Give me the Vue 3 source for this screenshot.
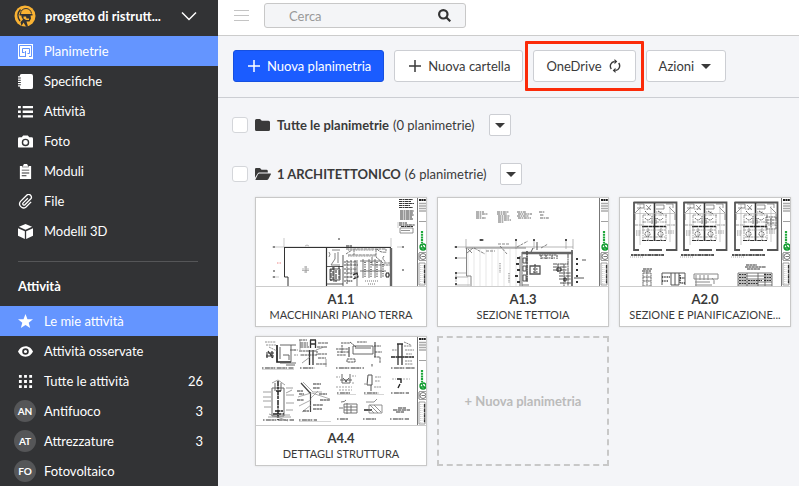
<script setup>
import { ref } from 'vue'

const search = ref('')

const modules = [
  { label: 'Planimetrie', icon: 'plan', active: true },
  { label: 'Specifiche', icon: 'book' },
  { label: 'Attività', icon: 'list' },
  { label: 'Foto', icon: 'camera' },
  { label: 'Moduli', icon: 'form' },
  { label: 'File', icon: 'clip' },
  { label: 'Modelli 3D', icon: 'cube' },
]

const tasks = [
  { label: 'Le mie attività', icon: 'star', active: true },
  { label: 'Attività osservate', icon: 'eye' },
  { label: 'Tutte le attività', icon: 'grid', count: 26 },
  { label: 'Antifuoco', badge: 'AN', count: 3 },
  { label: 'Attrezzature', badge: 'AT', count: 3 },
  { label: 'Fotovoltaico', badge: 'FO' },
]

const icons = {
  book: 'M4 0h10a2 2 0 0 1 2 2v12a2 2 0 0 1-2 2H4a2 2 0 0 1-2-2v-.6H0v-1.400h3v-1H0V9.600h3v-1H0V7.200h3v-1H0V4.800h3v-1H0V2.400h2A2 2 0 0 1 4 0z',
  list: 'M0 2h3v2.500H0zM5 2h11v2.500H5zM0 7h3v2.500H0zM5 7h11v2.500H5zM0 12h3v2.500H0zM5 12h11v2.500H5z',
  camera: 'M5.500 1.500h5L12 3.500h2.500A1.500 1.500 0 0 1 16 5v8.500a1 1 0 0 1-1 1H1a1 1 0 0 1-1-1V5a1.500 1.500 0 0 1 1.500-1.500H4zM8 5a4 4 0 1 0 0 8 4 4 0 0 0 0-8zM8 6.500a2.500 2.500 0 1 1 0 5 2.500 2.500 0 0 1 0-5z',
  form: 'M2 2h2.500v1.500h7V2H14v14H2zM5 2l1-1a2 2 0 0 1 4 0l1 1v1H5zM4 6v1h8V6zM4 9v1h8V9zM4 12v1h5v-1z',
  cube: 'M8 0l7 3-7 3.200L1 3zM0 4.500l7.300 3.300V16L0 12.500zM16 4.500L8.700 7.800V16l7.300-3.500z',
  star: 'M8 0l2.100 5.500 5.900.2-4.600 3.600L13 15 8 11.700 3 15l1.600-5.700L0 5.700l5.900-.2z',
  eye: 'M8 2.500c4 0 6.500 2.500 8 5.500-1.500 3-4 5.500-8 5.500S1.500 11 0 8c1.500-3 4-5.500 8-5.500zM8 4.500a3.500 3.500 0 1 0 0 7 3.500 3.500 0 0 0 0-7zM8 6.300a1.700 1.700 0 1 1 0 3.400 1.700 1.700 0 0 1 0-3.400z',
  grid: 'M1 1h3v3H1zM6.500 1h3v3h-3zM12 1h3v3h-3zM1 6.500h3v3H1zM6.500 6.500h3v3h-3zM12 6.500h3v3h-3zM1 12h3v3H1zM6.500 12h3v3h-3zM12 12h3v3h-3z',
}

// Title block printed along the right edge of every sheet.
const titleBlock = [
  { d: 'M161.500 0V88', c: '#777', w: 1 },
  { d: 'M163 2H170', c: '#222', w: 2, t: '2 .4' },
  { d: 'M163 5.500H170M163 8H170M163 10.500H170M163 13H170', c: '#aaa', w: 1.600 },
  { d: 'M163 23.500H170M163 54.500H170M163 62.500H170M163 65H169V87H163Z', c: '#888', w: 0.800 },
  { d: 'M166 33V45', c: '#20a83c', w: 2.200, t: '2 .7' },
  { d: 'M164 49a3 3 0 1 0 6 0a3 3 0 1 0-6 0M164.500 50H169M166 47L169 52', c: '#0d9a2c', w: 1.300 },
  { d: 'M164 58.500a3 3 0 1 0 6 0a3 3 0 1 0-6 0M165.500 58.500H169M163 55V62', c: '#666', w: 0.900 },
  { d: 'M168.500 67V86', c: '#333', w: 1.300, t: '3 .6 1 .5' },
  { d: 'M164.500 67V86M166 67V86', c: '#bbb', w: 0.600, t: '1 1' },
]

const rafters = 'M30 51V88M36 51V88M42 51V88M48 51V88M54 51V88M60 51V88M66 51V88M72 51V88M78 51V88'
const rooms = [0, 50, 101]
const roomPaths = rooms.flatMap((x) => [
  { d: `M${x + 13.500} 4.500H${x + 56.500}V52H${x + 46}M${x + 14} 4V52H${x + 19}M${x + 29} 52H${x + 42}`, c: '#555', w: 1.800 },
  { d: `M${x + 34.500} 5V42`, c: '#333', w: 1.600 },
  { d: `M${x + 22} 28.500H${x + 46}`, c: '#222', w: 1.600, t: '6 .5 4 .4' },
  { d: `M${x + 22} 42.500H${x + 46}`, c: '#333', w: 1.200, t: '4 .5 2 .6' },
  { d: `M${x + 11} 57H${x + 44}`, c: '#222', w: 1.300, t: '2 .5 4 .4' },
  { d: `M${x + 10} 59H${x + 24}`, c: '#999', w: 0.800, t: '1 1' },
  { d: `M${x + 15} 15L${x + 21} 9M${x + 55} 15L${x + 49} 9M${x + 15} 16V22M${x + 55} 16V22M${x + 17} 6H${x + 24}V10H${x + 17}M${x + 46} 6H${x + 53}V10M${x + 36} 7H${x + 44}V11H${x + 36}M${x + 26} 7L${x + 31} 12M${x + 31} 7L${x + 27} 12`, c: '#666', w: 0.700 },
  { d: `M${x + 14} 15.500H${x + 56}M${x + 20} 6V47M${x + 50} 8V44`, c: '#aaa', w: 0.600 },
  { d: `M${x + 23} 17H${x + 47}M${x + 23} 17V42M${x + 46} 17V42M${x + 23} 24H${x + 33}M${x + 36} 24H${x + 46}M${x + 22} 32H${x + 46}M${x + 28} 30V42M${x + 41} 30V42M${x + 15} 27H${x + 22}M${x + 47} 27H${x + 55}M${x + 24} 39H${x + 45}`, c: '#777', w: 0.700, t: '3 .8 1 .6' },
  { d: `M${x + 25} 13l4 4M${x + 38} 13l5 3M${x + 25} 20q3 4 6 0M${x + 37} 20q3 4 6 0M${x + 25} 36a2.500 2.500 0 1 0 5 0a2.500 2.500 0 1 0-5 0M${x + 38} 36a2.500 2.500 0 1 0 5 0a2.500 2.500 0 1 0-5 0M${x + 36} 20V26M${x + 32} 18V26`, c: '#333', w: 0.800, t: '1.500 .6' },
  { d: `M${x + 16} 33H${x + 21}M${x + 16} 35H${x + 21}M${x + 16} 37H${x + 20}M${x + 48} 33H${x + 54}M${x + 48} 35H${x + 54}M${x + 36} 14H${x + 42}M${x + 24} 11H${x + 31}`, c: '#777', w: 0.800, t: '1 .6' },
])

const a11 = [
  { d: 'M143 1.500H157M143 3.500H155M143 5.500H158M143 7.500H154M143 9.500H157M144 13H158M144 15H157M144 17H158M144 19H156M144 21H157M143 25H151M143 27H159M145 28.500H157', c: '#333', w: 1.100, t: '3 .5 1.500 .5 4 .4' },
  { d: 'M144 30H157V35H144ZM145 32.500H154', c: '#777', w: 0.800 },
  { d: 'M142 24V30M16 49H135M135 40V49M28 40V49M141 49H148M16 79H23', c: '#bbb', w: 0.800 },
  { d: 'M28 49.500H135M28.500 49V79H32V88', c: '#333', w: 1 },
  { d: 'M135 50V88', c: '#666', w: 2.400 },
  { d: 'M70.500 50V88', c: '#333', w: 1.200 },
  { d: 'M71 68.500H87M87 57V88M71 86H87M78 69V84M74 71H84V82H74Z', c: '#444', w: 0.900 },
  { d: 'M75 71V83M77 69V82M80 72V84M83 68V82', c: '#222', w: 1, t: '3 1 5 .8' },
  { d: 'M90 51H130V53M92 57H120M90 56L96 52M98 51V57M120 51V59L127 65H134M121 51Q124 55 131 54M116 59V67H134M128 58Q125 61 130 64', c: '#555', w: 0.800, t: '3 .6' },
  { d: 'M92 52H118M92 58H119', c: '#aaa', w: 1.400, t: '1 .6' },
  { d: 'M88 64H101M88 67H102M88 71H101M88 75H101M88 79H97M88 83H97M91 62V86M95 62V80M99 62V80', c: '#444', w: 0.900, t: '2 .8 3 .6' },
  { d: 'M101 62V88M107 61V80M113 61V80M119 61V80M125 64V80M104 73H130M104 63H126', c: '#555', w: 0.800 },
  { d: 'M109 64V79M115 64V79M121 64V79M127 66V79', c: '#444', w: 1.400, t: '1 1.300' },
  { d: 'M90 48H96M97 77l4-2 1 4-5 2M130 75h3v4h-3z', c: '#222', w: 1.200, t: '3 .5' },
  { d: 'M109 83H122M112 86H119M91 83H96', c: '#666', w: 0.900, t: '1 1' },
  { d: 'M73 54q2 2 0 5M76 52H84M82 54V65M79 55V61L75 67H84', c: '#777', w: 0.900 },
  { d: 'M46 71H53M48 69H51M46 72.500H53M48 74H51M50 68V75M49 48q2-2 4 0', c: '#888', w: 0.600 },
  { d: 'M21 65H26', c: '#e88', w: 1, t: '1.500 1' },
  { d: 'M17 49h2M17 73h2M82 41h2M146 49h2M146 72h2M17 79h2', c: '#333', w: 1.200 },
]

const a13 = [
  { d: 'M38 14H46M38 16H50M38 18H44M38 20H48M59 14H71M59 16H69M60 18H72M60 20H71M60 22H73M60 24H66M79 14H88M80 16H94M79 18H91M80 20H93M101 14H107M102 17H106M102 20H111', c: '#555', w: 0.900, t: '3 .6 1.500 .7' },
  { d: rafters, c: '#ddd', w: 0.700 },
  { d: 'M16 49H135M28 41V51M135 41V51M78 41V51M96 42V51M17 60H28M17 75H28M17 79H30M17 87H32M18 76V84M128 41V51', c: '#999', w: 0.700 },
  { d: 'M28 50H88M28.500 50V78H33V88M29 55l6-5M30 51l4 4', c: '#777', w: 0.900 },
  { d: 'M48 53H57M36 50L47 56M62 48L69 56M79 49L90 43M41 42H46M60 46H72M103 50L110 46', c: '#555', w: 0.700, t: '3 1' },
  { d: 'M84 55H135', c: '#666', w: 2.600 },
  { d: 'M89 53V84', c: '#555', w: 1.700, t: '4 .4 2 .3' },
  { d: 'M84 54V88M84 87H91M82 58V88', c: '#777', w: 1.100 },
  { d: 'M79 60h3M78 66h3M79 72h3M77 78h3M79 84h3', c: '#333', w: 2 },
  { d: 'M85 60h3v5h-3zM85 68h3v5h-3zM85 77h3v6h-3z', c: '#444', w: 0.900 },
  { d: 'M92 68h10v8h-10z', c: '#555', w: 1.300 },
  { d: 'M95 71h5M95 74h5M97 66V75', c: '#333', w: 1, t: '2 .6' },
  { d: 'M101 57h18M103 60h14M103 57v4M108 57v4M114 57v4M119 57v4', c: '#555', w: 1.100, t: '2 .5' },
  { d: 'M115 66H130M115 69H129M115 72H129M121 75H133M121 78H133M121 81H133M122 85H133M120 66V74M126 66V88M130 56V88', c: '#555', w: 1, t: '4 .5 2 .4' },
  { d: 'M134 52V88', c: '#666', w: 1.800 },
  { d: 'M119 70h4v3h-4zM126 80h2v3h-2z', c: '#222', w: 1 },
  { d: 'M138 61h2M138 66h2M138 72h2M138 78h2M138 84h2', c: '#333', w: 1.800 },
  { d: 'M62 65V75M71 75V85', c: '#888', w: 1.100, t: '1 .7' },
  { d: 'M144 62H148M136 80H146M95 50l-2 4M99 44v8', c: '#444', w: 0.900 },
  { d: 'M17 60h2M17 49h2M17 75h2M17 80h2M17 86h2M42 42h3M77 42h2M95 42h2M127 42h2', c: '#222', w: 1.300 },
]

const a20 = [
  ...roomPaths,
  { d: 'M146 19h10v12h-10zM147 22h8M147 25h8M151 20v10', c: '#555', w: 0.900, t: '2 .5' },
  { d: 'M23 71H32M22 73H31M126 67H137M125 69H146M127 71H140', c: '#333', w: 1.100, t: '3 .4' },
  { d: 'M23 75h8v13h-8zM23 79h8M23 83h8M27 74v13', c: '#666', w: 1, t: '2 .4' },
  { d: 'M42 75h23v12M42 75v12M51 75v12h8v-12M55 75v12', c: '#555', w: 1 },
  { d: 'M42 79H50M42 83H48M60 77v8h5M60 80h5', c: '#333', w: 1.400, t: '1 .7' },
  { d: 'M74 76h24v5H74zM76 77V88M80 77V82M84 77V82M88 77V82M92 80q3 2 2 6M75 84H90M75 87H92', c: '#888', w: 1 },
  { d: 'M118 75H152M118 78H152M118 81H152M118 84H152M118 87H152M118 75V88M127 75V88M138 75V88M145 75V88M152 75V88', c: '#555', w: 0.800 },
  { d: 'M119 76.500H126M119 79.500H126M119 82.500H126M119 85.500H126M144 76.500H151M144 79.500H151M144 82.500H151M128 82.500H142M128 85.500H138', c: '#333', w: 1, t: '2 .6' },
]

const a44 = [
  { d: 'M6 31H38M44 31H59M80 31H108M135 31H159M7 83H38M43 83H61M81 56H94M108 56H123M135 56H153M81 82H92M107 82H120M134 82H153', c: '#333', w: 1.200, t: '1.500 1.400 5 .5 3 .4' },
  { d: 'M6 32.500H38M43 84.500H75M81 57.500H100M108 57.500H128', c: '#bbb', w: 0.600 },
  { d: 'M21 8V25H35', c: '#222', w: 1.700 },
  { d: 'M35 8V25M24 10V22M27 18h6v5M24 8H40M34 13H40M24 26H40M30 28H39', c: '#555', w: 0.900 },
  { d: 'M10 16h8M10 19h8M11 17v4M16 14v7M12 14l5 7', c: '#333', w: 1.200 },
  { d: 'M9 5H20M10 8H20M13 10L21 14M38 13h4M38 18h4', c: '#777', w: 0.800, t: '2 .7' },
  { d: 'M54.500 3V11M59.500 3V11M54 3H60M54 7H60M53.500 13V28M57 13V28', c: '#333', w: 1.300 },
  { d: 'M43 14H61V18H44M44 6H52M44 8H52M44 10H53M43 3H51M62 6H72M61 10H71M62 17H71M62 21H70M60 27H71', c: '#555', w: 1, t: '3 .5' },
  { d: 'M46 26L54 20M60 13l8-3M44 3v10M70 22v8', c: '#777', w: 0.700 },
  { d: 'M97 9H117V17H97ZM99 11H115', c: '#555', w: 0.900 },
  { d: 'M80 12H92M81 15H93M81 18H90M85 6H94M86 8V16M94 5l6 5M101 5H111M118 9H125M119 15H126M118 20H124V26M116 27V30M91 22H99V25H91Z', c: '#444', w: 0.900, t: '2.500 .6' },
  { d: 'M93 10V20M119 5V20', c: '#444', w: 1.100 },
  { d: 'M142 7V28M146 7V28M141 7H147', c: '#333', w: 1.300 },
  { d: 'M135 20H158', c: '#222', w: 1.500, t: '4 .5 2 .3' },
  { d: 'M148 5l7 3M148 9H156M149 13H158M150 17H156M136 13H141M149 24H156M149 27H157', c: '#777', w: 0.900, t: '2 .6' },
  { d: 'M16 51H28V79H16ZM19 46V54M25 46V54', c: '#666', w: 1 },
  { d: 'M22 44V83M20 54H25M19 74H27M17 77H28', c: '#222', w: 1.500, t: '5 .5 3 1' },
  { d: 'M12 80H35M13 77L32 84M26 78h8M16 46l6-3 7 5M30 56l6-3M7 55H15M7 60H15M7 64H15M8 70H15M30 51H37M30 58H38M30 66H38M30 73H37', c: '#888', w: 0.800 },
  { d: 'M54.500 55V75M45 46L55 57', c: '#444', w: 1.200 },
  { d: 'M47 45L57 55H66M56 56L74 62M55 61L62 54M42 60l13-4M43 69l12-6M46 75l9-7', c: '#888', w: 0.700 },
  { d: 'M57 47H65M57 51H64M41 54H47M43 57H48M41 63H48M63 57H71M64 63H74M57 68H67M57 72H66M47 74H53', c: '#333', w: 1.100, t: '3 .4' },
  { d: 'M86 37V46H94V37M84 43H96M87 41l4 4M93 41l-4 4', c: '#666', w: 1 },
  { d: 'M80 40H84M96 39H100M96 46H99M80 50H96M83 53H96', c: '#888', w: 0.800, t: '2 1' },
  { d: 'M112 38H116V48H111ZM115 48V54', c: '#555', w: 1 },
  { d: 'M119 40H125M119 44H124M118 50H125M108 47H111', c: '#888', w: 0.900, t: '2 .6' },
  { d: 'M141 42H145V46M144 47l-2 4', c: '#222', w: 1.400 },
  { d: 'M147 42H154M136 42H140', c: '#999', w: 0.800, t: '2 1' },
  { d: 'M88 67H101V76H88ZM88 70H101M88 73H101M91 66V77M95 68V76M85 65q4 0 5-2M83 71H87', c: '#666', w: 0.900 },
  { d: 'M108 73H116', c: '#222', w: 1.500 },
  { d: 'M113 68H126V76H113ZM114 68l8 8M118 68l7 7M114 72l4 4M110 65H118L121 62', c: '#777', w: 0.800 },
  { d: 'M137 73H154M142 71H150M140 75H148', c: '#333', w: 1.100, t: '4 .5' },
]

const sheets = [
  { code: 'A1.1', name: 'MACCHINARI PIANO TERRA', art: a11 },
  { code: 'A1.3', name: 'SEZIONE TETTOIA', art: a13 },
  { code: 'A2.0', name: 'SEZIONE E PIANIFICAZIONE...', art: a20 },
  { code: 'A4.4', name: 'DETTAGLI STRUTTURA', art: a44 },
].map((s) => ({ ...s, art: [...s.art, ...titleBlock] }))

const folders = [
  { name: 'Tutte le planimetrie', count: '(0 planimetrie)', open: false, id: 'folder-all' },
  { name: '1 ARCHITETTONICO', count: '(6 planimetrie)', open: true, id: 'folder-arch' },
]
</script>

<template>
  <div class="app">
    <aside class="sidebar">
      <button class="project" type="button">
        <svg class="logo" viewBox="0 0 22 22" aria-hidden="true">
          <circle cx="11" cy="11" r="10.500" fill="#f9b233" />
          <path d="M6.500 4.500C3.500 7.500 3 12 6 16" fill="none" stroke="#323335" stroke-width="1.500" />
          <path d="M6.500 9C6.500 5.500 9 3.500 12 3.500S17 5.500 17.500 8.500" fill="none" stroke="#323335" stroke-width="1" />
          <path d="M5.500 9H18.500V10.500H16.500L17 13.500 15.500 16.500H12.500L14 21.500H12L9.500 17.500 7.500 21 6.500 17 9 14.500 7.500 12V10.500H5.500Z" fill="#323335" />
          <path d="M9.500 11.500H12L12.500 13.500H15V15H12L9.500 13.500Z" fill="#f9b233" />
        </svg>
        <span class="project-name">progetto di ristrutt...</span>
        <svg class="chevron" viewBox="0 0 16 10" aria-hidden="true"><path d="M1 1.500L8 8.500 15 1.500" /></svg>
      </button>
      <nav class="nav">
        <a v-for="m in modules" :key="m.label" href="#" class="item" :class="{ active: m.active }">
          <span class="slot">
            <svg v-if="m.icon === 'clip'" class="icon" viewBox="0 0 16 16" aria-hidden="true">
              <path class="line" d="M10.500 4.500L5.500 9.500a1.300 1.300 0 0 0 1.900 1.900l6-6a2.900 2.900 0 0 0-4.100-4.100L2.700 7.900a4.200 4.200 0 0 0 5.900 5.900l5.400-5.400" />
            </svg>
            <svg v-else-if="m.icon === 'plan'" class="icon" viewBox="0 0 15 15" aria-hidden="true">
              <rect width="15" height="15" />
              <path class="walls" d="M8 12.500H1.500V1.500H13.500V12.500H11M4.500 9V4.500H11.500V9.500H9.500M4 8.500H6.500M7.500 7V13" />
            </svg>
            <svg v-else class="icon" viewBox="0 0 16 16" aria-hidden="true"><path fill-rule="evenodd" :d="icons[m.icon]" /></svg>
          </span>
          <span class="label">{{ m.label }}</span>
        </a>
      </nav>
      <hr class="rule" />
      <h2 class="heading">Attività</h2>
      <nav class="nav">
        <a v-for="t in tasks" :key="t.label" href="#" class="item" :class="{ active: t.active }">
          <span class="slot">
            <span v-if="t.badge" class="avatar">{{ t.badge }}</span>
            <svg v-else class="icon" viewBox="0 0 16 16" aria-hidden="true"><path fill-rule="evenodd" :d="icons[t.icon]" /></svg>
          </span>
          <span class="label">{{ t.label }}</span>
          <span v-if="t.count" class="count">{{ t.count }}</span>
        </a>
      </nav>
    </aside>

    <main class="main">
      <header class="topbar">
        <button class="menu" type="button" aria-label="Menu">
          <svg viewBox="0 0 15 12" aria-hidden="true"><path d="M0 .5H15M0 5.500H15M0 10.500H15" /></svg>
        </button>
        <form class="search" @submit.prevent>
          <input v-model="search" type="search" placeholder="Cerca" aria-label="Cerca" />
          <button type="submit" aria-label="Cerca">
            <svg viewBox="0 0 13 13" aria-hidden="true"><circle cx="5.300" cy="5.300" r="4.200" /><path d="M8.500 8.500L12.300 12.300" /></svg>
          </button>
        </form>
      </header>

      <div class="toolbar">
        <button class="btn primary" type="button">
          <svg class="plus" viewBox="0 0 12 12" aria-hidden="true"><path d="M6 0V12M0 6H12" /></svg>Nuova planimetria
        </button>
        <button class="btn lead" type="button">
          <svg class="plus" viewBox="0 0 12 12" aria-hidden="true"><path d="M6 0V12M0 6H12" /></svg>Nuova cartella
        </button>
        <button class="btn marked" type="button">
          OneDrive
          <svg class="sync" viewBox="0 0 12 14" aria-hidden="true">
            <path class="line" d="M2.300 10A4.700 4.700 0 0 1 5.500 2.500M9.700 4A4.700 4.700 0 0 1 6.500 11.500" />
            <path d="M5.500 0L8.300 2.600 5.500 5.200ZM6.500 8.800L3.700 11.400 6.500 14Z" />
          </svg>
        </button>
        <button class="btn" type="button">
          Azioni
          <svg class="caret" viewBox="0 0 10 5" aria-hidden="true"><path d="M0 0H10L5 5Z" /></svg>
        </button>
      </div>

      <div class="content">
        <section v-for="f in folders" :key="f.id" class="folder">
          <div class="folder-head">
            <input :id="f.id" type="checkbox" />
            <label :for="f.id">
              <svg class="folder-icon" viewBox="0 0 16 12" aria-hidden="true">
                <path v-if="f.open" d="M0 1.500A1.300 1.300 0 0 1 1.300 0H5l1.500 1.800h5A1.300 1.300 0 0 1 12.800 3v1.500H4.500A2.200 2.200 0 0 0 2.500 5.700L0 9.800ZM4.300 5.500H15.500q.7 0 .4.700L13.400 11a1.800 1.800 0 0 1-1.600 1H.8Q.2 12 .5 11.400L3 6.300a1.500 1.500 0 0 1 1.300-.8Z" />
                <path v-else d="M0 1.500A1.500 1.500 0 0 1 1.500 0H5L6.800 1.800H13.500A1.500 1.500 0 0 1 15 3.300V10.500A1.500 1.500 0 0 1 13.500 12H1.500A1.500 1.500 0 0 1 0 10.500Z" />
              </svg>
              <strong>{{ f.name }}</strong> <span>{{ f.count }}</span>
            </label>
            <button class="drop" type="button" :aria-label="f.name">
              <svg class="caret" viewBox="0 0 10 5" aria-hidden="true"><path d="M0 0H10L5 5Z" /></svg>
            </button>
          </div>
          <div v-if="f.open" class="sheets">
            <a v-for="s in sheets" :key="s.code" href="#" class="sheet">
              <svg class="thumb" viewBox="0 0 170 88" aria-hidden="true">
                <path v-for="(p, i) in s.art" :key="i" :d="p.d" :stroke="p.c" :stroke-width="p.w" :stroke-dasharray="p.t" fill="none" />
              </svg>
              <span class="caption">
                <strong>{{ s.code }}</strong>
                <span>{{ s.name }}</span>
              </span>
            </a>
            <button class="add" type="button">+ Nuova planimetria</button>
          </div>
        </section>
      </div>
    </main>
  </div>
</template>

<style>
body {
  background: #f4f5f8;
}
</style>

<style scoped>
.app {
  display: flex;
  min-height: 100vh;
  font: 13px/20px Lato, "Liberation Sans", sans-serif;
  color: #3a3a3a;
}
.app * {
  box-sizing: border-box;
}
button,
input {
  font: inherit;
  color: inherit;
  margin: 0;
}
button {
  cursor: pointer;
}
a {
  color: inherit;
  text-decoration: none;
}
svg {
  display: block;
  flex: none;
}

.sidebar {
  flex: none;
  width: 218px;
  background: #323335;
  color: #fff;
}
.project {
  display: flex;
  align-items: center;
  width: 100%;
  height: 36px;
  padding: 0 21px 4px 14px;
  border: 0;
  background: none;
  font-weight: 700;
  text-align: left;
}
.logo {
  width: 22px;
  height: 22px;
}
.project-name {
  flex: 1;
  padding-left: 9px;
  white-space: nowrap;
}
.chevron {
  width: 16px;
  height: 10px;
  fill: none;
  stroke: #fff;
  stroke-width: 1.5;
}
.item {
  display: flex;
  align-items: center;
  height: 30px;
  padding: 0 15px 0 14px;
}
.item.active {
  background: #6495ff;
}
.slot {
  display: flex;
  justify-content: center;
  width: 22px;
}
.icon {
  width: 15px;
  height: 15px;
  fill: #fff;
}
.line {
  fill: none;
  stroke: currentColor;
  stroke-width: 1.4;
}
.walls {
  fill: none;
  stroke: #6495ff;
  stroke-width: 1;
}
.label {
  flex: 1;
  padding-left: 8px;
}
.avatar {
  width: 22px;
  height: 22px;
  border-radius: 50%;
  background: #555658;
  font-size: 10px;
  font-weight: 700;
  line-height: 22px;
  text-align: center;
}
.rule {
  height: 1px;
  margin: 15px 20px 14px 18px;
  border: 0;
  background: #555658;
}
.heading {
  margin: 0;
  padding: 0 18px 10px;
  font-size: 13px;
  line-height: 20px;
}

.main {
  flex: 1;
  min-width: 0;
}
.topbar {
  display: flex;
  align-items: center;
  gap: 15px;
  height: 36px;
  padding: 0 16px 4px;
  border-bottom: 1px solid #ccc;
  background: #fff;
}
.menu {
  padding: 0;
  border: 0;
  background: none;
}
.menu svg {
  width: 15px;
  height: 12px;
  stroke: #c4c4c4;
}
.search {
  display: flex;
  align-items: center;
  width: 202px;
  height: 25px;
  padding: 0 14px 0 24px;
  border: 1px solid #c8c8c8;
  border-radius: 3px;
  background: #f4f5f7;
}
.search input {
  flex: 1;
  min-width: 0;
  padding: 0;
  border: 0;
  outline: 0;
  background: none;
  appearance: none;
}
.search input::placeholder {
  color: #999;
}
.search button {
  padding: 0;
  border: 0;
  background: none;
}
.search svg {
  width: 13px;
  height: 13px;
  fill: none;
  stroke: #333;
  stroke-width: 2.2;
}
.toolbar {
  display: flex;
  flex-wrap: wrap;
  gap: 10px;
  padding: 14px 15px 15px;
  border-bottom: 1px solid #ccced3;
}
.btn {
  position: relative;
  display: flex;
  align-items: center;
  gap: 7px;
  height: 32px;
  padding: 0 14px 0 12px;
  border: 1px solid #ccced3;
  border-radius: 3px;
  background: #fff;
  white-space: nowrap;
}
.lead,
.primary {
  padding: 0 12px 0 14px;
}
.primary {
  border-color: #1650e0;
  background: #1b5cff;
  color: #fff;
}
.plus {
  width: 12px;
  height: 12px;
  stroke: currentColor;
  stroke-width: 1.5;
}
.sync {
  width: 12px;
  height: 14px;
  fill: currentColor;
}
.marked::after {
  content: "";
  position: absolute;
  inset: -10px -9px;
  border: 3px solid #fb2b09;
  border-radius: 1px;
}
.caret {
  width: 10px;
  height: 5px;
  fill: currentColor;
}
.content {
  padding: 16px 8px 20px 14px;
}
.folder + .folder {
  margin-top: 27px;
}
.folder-head {
  display: flex;
  align-items: center;
}
.folder-head input {
  width: 16px;
  height: 16px;
  border: 1px solid #d4d6da;
  border-radius: 3px;
  background: #fff;
  appearance: none;
}
.folder-head label {
  display: flex;
  align-items: center;
  gap: 4px;
  padding: 0 14px 0 7px;
}
.folder-icon {
  width: 16px;
  height: 12px;
  margin-right: 2px;
  fill: #3a3a3a;
}
.drop {
  display: grid;
  place-items: center;
  width: 22px;
  height: 22px;
  padding: 0;
  border: 1px solid #ccced3;
  border-radius: 2px;
  background: #fff;
}
.sheets {
  display: grid;
  grid-template-columns: repeat(auto-fill, 172px);
  gap: 9px 10px;
  padding: 12px 0 0 23px;
}
.sheet {
  border: 1px solid #c8c8c8;
  background: #fff;
  box-shadow: 0 0 2px #ddd;
}
.thumb {
  width: 100%;
  height: auto;
  border-bottom: 1px solid #ccc;
}
.caption {
  display: flex;
  flex-direction: column;
  padding: 4px 0;
  font-size: 11px;
  line-height: 15px;
  text-align: center;
}
.caption strong {
  font-size: 13px;
  line-height: 16px;
}
.add {
  border: 2px dashed #c8c8c8;
  background: none;
  color: #bbb;
  font-weight: 700;
}
</style>
